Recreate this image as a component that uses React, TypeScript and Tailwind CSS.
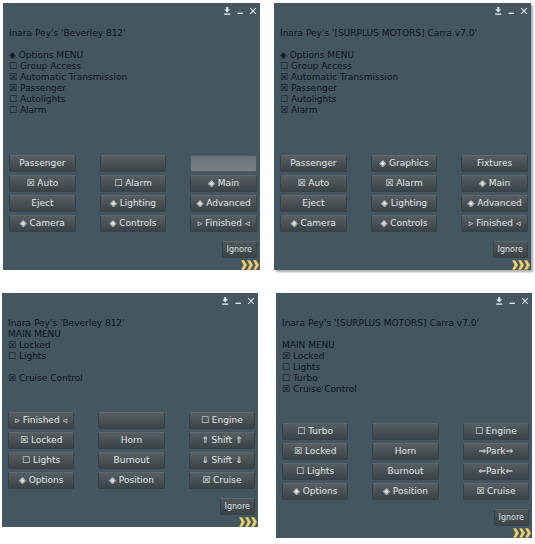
import React from "react";
import clsx from "clsx";

type Dialog = {
  title: string;
  lines: string[];
  buttons: string[];
  pressed?: number;
  shadow?: boolean;
};

const optionDialogs: Dialog[] = [
  {
    title: "Inara Pey's 'Beverley 812'",
    lines: [
      "",
      "◈ Options MENU",
      "☐ Group Access",
      "☒ Automatic Transmission",
      "☒ Passenger",
      "☐ Autolights",
      "☐ Alarm",
      "",
    ],
    buttons: [
      "Passenger", "", "",
      "☒ Auto", "☐ Alarm", "◈ Main",
      "Eject", "◈ Lighting", "◈ Advanced",
      "◈ Camera", "◈ Controls", "▹ Finished ◃",
    ],
    pressed: 2,
  },
  {
    title: "Inara Pey's '[SURPLUS MOTORS] Carra v7.0'",
    lines: [
      "",
      "◈ Options MENU",
      "☐ Group Access",
      "☒ Automatic Transmission",
      "☒ Passenger",
      "☐ Autolights",
      "☒ Alarm",
      "",
    ],
    buttons: [
      "Passenger", "◈ Graphics", "Fixtures",
      "☒ Auto", "☒ Alarm", "◈ Main",
      "Eject", "◈ Lighting", "◈ Advanced",
      "◈ Camera", "◈ Controls", "▹ Finished ◃",
    ],
    shadow: true,
  },
];

const mainDialogs: Dialog[] = [
  {
    title: "Inara Pey's 'Beverley 812'",
    lines: ["MAIN MENU", "☒ Locked", "☐ Lights", "", "☒ Cruise Control"],
    buttons: [
      "▹ Finished ◃", "", "☐ Engine",
      "☒ Locked", "Horn", "⇑ Shift ⇑",
      "☐ Lights", "Burnout", "⇓ Shift ⇓",
      "◈ Options", "◈ Position", "☒ Cruise",
    ],
  },
  {
    title: "Inara Pey's '[SURPLUS MOTORS] Carra v7.0'",
    lines: ["", "MAIN MENU", "☒ Locked", "☐ Lights", "☐ Turbo", "☒ Cruise Control"],
    buttons: [
      "☐ Turbo", "", "☐ Engine",
      "☒ Locked", "Horn", "⇒Park⇒",
      "☐ Lights", "Burnout", "⇐Park⇐",
      "◈ Options", "◈ Position", "☒ Cruise",
    ],
  },
];

// Dock / minimize / close icons
function WindowControls() {
  return (
    <div className="flex h-[25px] justify-end gap-[5px] pt-1 text-[#dfe5e8]">
      <button aria-label="Dock" className="h-2 w-2">
        <svg viewBox="0 0 8 8" className="h-2 w-2" fill="currentColor">
          <path d="M3.1 0h2.2v2.6h1.9L4.2 5.5 1.2 2.6h1.9z" />
          <path d="M1.2 6.4h6v1.4h-6z" />
        </svg>
      </button>
      <button aria-label="Minimize" className="h-2 w-2">
        <svg viewBox="0 0 8 8" className="h-2 w-2" fill="currentColor">
          <path d="M1.5 5.6h5.4v1.4H1.5z" />
        </svg>
      </button>
      <button aria-label="Close" className="h-2 w-2">
        <svg viewBox="0 0 8 8" className="h-2 w-2" fill="none" stroke="currentColor" strokeWidth="1.1">
          <path d="M1.2 1.2l5.6 5.6M6.8 1.2l-5.6 5.6" />
        </svg>
      </button>
    </div>
  );
}

// Yellow arrows that show the next queued dialog
function NextButton() {
  return (
    <button aria-label="Next" className="block h-[10px] w-[18px]">
      <svg viewBox="0 0 18 10" className="h-[10px] w-[18px]" strokeLinejoin="round">
        {[0, 6, 12].map((x) => (
          <path
            key={x}
            transform={`translate(${x} 0)`}
            d="M0.2 0.2h2.8l2.9 4.8-2.9 4.8H0.2L2.7 5z"
            fill="#efd06b"
            stroke="#c9ae5c"
            strokeWidth="0.3"
          />
        ))}
      </svg>
    </button>
  );
}

function MenuButton({ label, pressed }: { label: string; pressed?: boolean }) {
  return (
    <button
      aria-label={label || "Blank"}
      className={clsx(
        "flex h-[17px] items-center justify-center whitespace-pre rounded-[2px] border text-[9px] leading-[11px] text-[#e3e7e9]",
        pressed
          ? "border-[#4c5a61] bg-linear-to-b from-[#697277] to-[#7d8386]"
          : "border-[#344249] border-t-[#5e686d] bg-linear-to-b from-[#575e62] to-[#3b4347]"
      )}
    >
      {label}
    </button>
  );
}

function DialogPanel({ dialog }: { dialog: Dialog }) {
  return (
    <section
      className={clsx(
        "bg-[#445761] pr-[3px] pl-[6px]",
        dialog.shadow && "shadow-[2px_2px_2px_rgba(0,0,0,0.35)]"
      )}
    >
      <WindowControls />

      {/* Message */}
      <div className="pb-[28px] text-[9px] leading-[11px] text-[#0b151b]">
        <h2>{dialog.title}</h2>
        {dialog.lines.map((line, i) => (
          <p key={i} className="h-[11px] whitespace-pre">
            {line}
          </p>
        ))}
      </div>

      {/* Choices */}
      <div className="grid grid-cols-3 gap-x-6 gap-y-[3px]">
        {dialog.buttons.map((label, i) => (
          <MenuButton key={i} label={label} pressed={dialog.pressed === i} />
        ))}
      </div>

      {/* Footer */}
      <div className="flex flex-col items-end pt-[9px]">
        <button className="mb-[2px] h-[17px] rounded-[2px] border border-[#344249] border-t-[#5e686d] bg-linear-to-b from-[#50575b] to-[#3b4347] px-1 text-[8px] leading-[11px] text-[#dfe3e5]">
          Ignore
        </button>
        <div className="-mr-[2px]">
          <NextButton />
        </div>
      </div>
    </section>
  );
}

export default function App() {
  return (
    <main className="bg-white font-['DejaVu_Sans',sans-serif]">
      <div className="grid grid-cols-2 items-start gap-[14px] pt-[3px] pr-1 pl-[3px]">
        {optionDialogs.map((dialog) => (
          <DialogPanel key={dialog.title} dialog={dialog} />
        ))}
      </div>
      <div className="grid grid-cols-2 items-start gap-[18px] pt-[23px] pr-[3px] pb-[6px] pl-[2px]">
        {mainDialogs.map((dialog) => (
          <DialogPanel key={dialog.title} dialog={dialog} />
        ))}
      </div>
    </main>
  );
}
